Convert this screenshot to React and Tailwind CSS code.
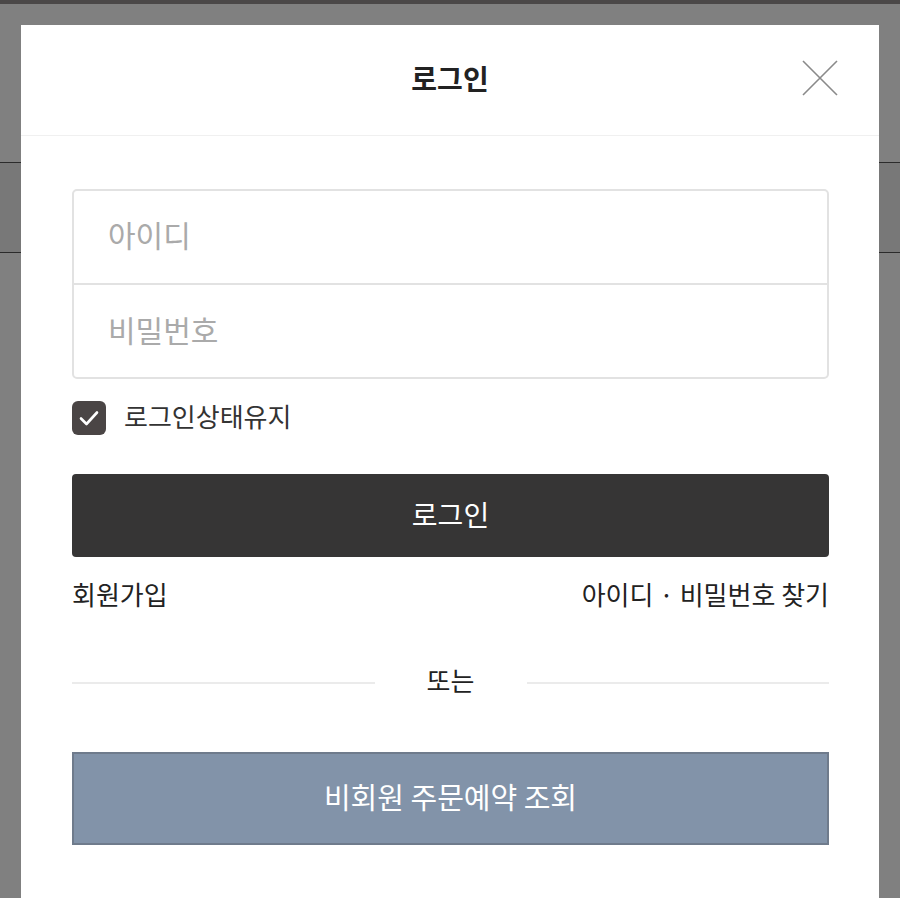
import React from "react";

const font = { fontFamily: '"Noto Sans CJK KR", "Noto Sans", sans-serif' };

function CloseIcon() {
  return (
    <svg width="36" height="36" viewBox="0 0 36 36" fill="none">
      <path d="M1 1L35 35M35 1L1 35" stroke="#8a8a8a" strokeWidth="1.6" />
    </svg>
  );
}

function LoginModal() {
  return (
    <div className="absolute left-[21px] top-[25px] w-[858px] bottom-0 bg-white">
      {/* Header */}
      <div className="relative h-[111px] border-b border-[#f0f0f0] flex items-center justify-center">
        <h1 className="text-[28px] leading-none font-bold text-[#222] pb-[4px]">로그인</h1>
        <button className="absolute right-[41px] top-[35px]">
          <CloseIcon />
        </button>
      </div>

      {/* Body */}
      <div className="pl-[51px] pr-[50px] pt-[53px]">
        <div className="border-2 border-[#e2e2e2] rounded-[5px] flex flex-col">
          <input
            placeholder="아이디"
            className="h-[94px] pl-[34px] pb-[6px] text-[30px] outline-none placeholder:text-[#aaa] border-b-2 border-[#e2e2e2] rounded-t-[5px]"
            style={font}
          />
          <input
            type="password"
            placeholder="비밀번호"
            className="h-[92px] pl-[34px] pb-[4px] text-[30px] outline-none placeholder:text-[#aaa] rounded-b-[5px]"
            style={font}
          />
        </div>

        <label className="flex items-center gap-[18px] mt-[22px]">
          <span className="w-[34px] h-[34px] rounded-[6px] bg-[#4a4545] flex items-center justify-center">
            <svg width="22" height="22" viewBox="0 0 22 22" fill="none">
              <path d="M3 11.5L8.5 17L19 5.5" stroke="white" strokeWidth="2.6" strokeLinecap="round" strokeLinejoin="round" />
            </svg>
          </span>
          <span className="text-[26px] leading-none text-[#333] pb-[4px]">로그인상태유지</span>
        </label>

        <button className="mt-[39px] w-full h-[83px] bg-[#363535] rounded-[4px] text-white text-[28px] leading-none pb-[4px]">
          로그인
        </button>

        <div className="flex items-center justify-between mt-[24px] text-[26px] leading-none text-[#222]">
          <a href="#">회원가입</a>
          <a href="#">아이디 · 비밀번호 찾기</a>
        </div>

        <div className="flex items-center mt-[60px]">
          <div className="flex-1 h-[2px] bg-[#ebebeb]" />
          <span className="w-[152px] text-center text-[26px] leading-none text-[#222] pb-[6px]">또는</span>
          <div className="flex-1 h-[2px] bg-[#ebebeb]" />
        </div>

        <button className="mt-[53px] w-full h-[93px] bg-[#8293a9] border-2 border-[#6f7b8c] text-white text-[29px] leading-none pb-[4px]">
          비회원 주문예약 조회
        </button>
      </div>
    </div>
  );
}

export default function App() {
  return (
    <div className="relative h-[898px] overflow-hidden bg-[#808080]" style={font}>
      {/* Page behind the overlay */}
      <div className="h-[4px] bg-[#4b4848]" />
      <div className="h-[158px]" />
      <div className="h-[91px] bg-[#787878] border-y border-[#2b2b2b]" />

      <LoginModal />
    </div>
  );
}
